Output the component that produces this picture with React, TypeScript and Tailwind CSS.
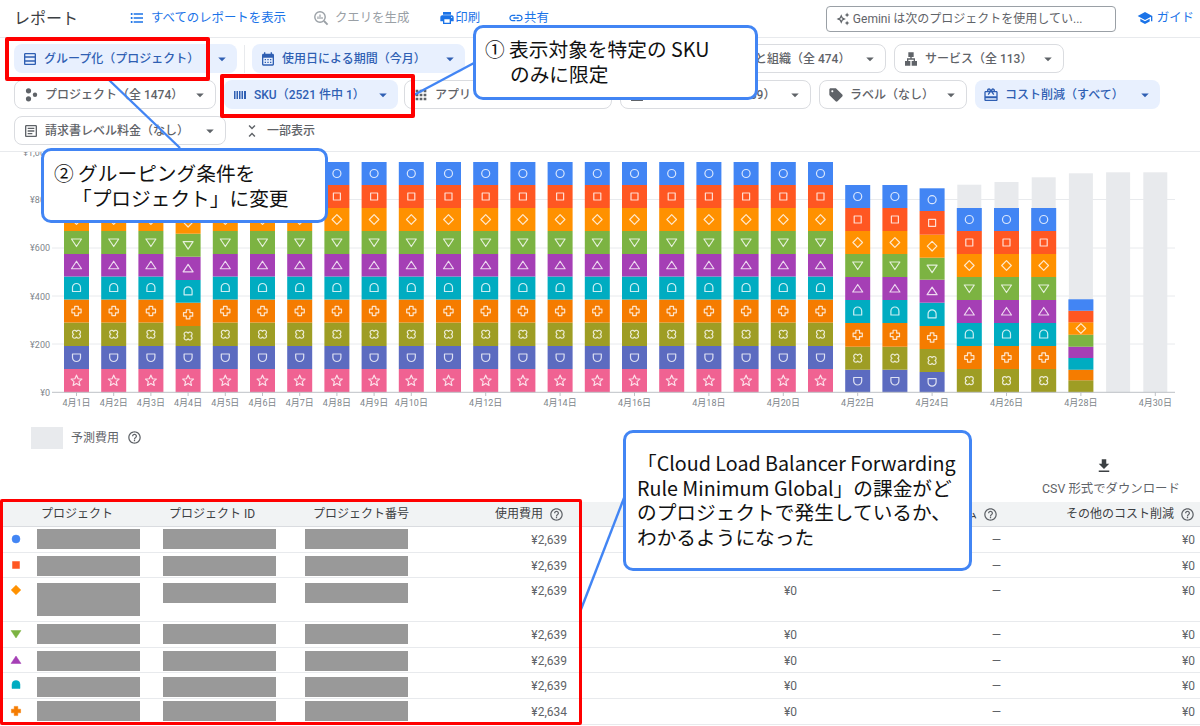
import type { ReactNode } from "react";
import {
  MdApps,
  MdArrowDropDown,
  MdCalendarMonth,
  MdCardGiftcard,
  MdFileDownload,
  MdFormatListBulleted,
  MdHelpOutline,
  MdLan,
  MdLink,
  MdOutlineArticle,
  MdOutlineAutoAwesome,
  MdOutlineListAlt,
  MdOutlineTableRows,
  MdPrint,
  MdSchool,
  MdSell,
  MdUnfoldLess,
} from "react-icons/md";

const COLORS = [
  "#f06292",
  "#5c6bc0",
  "#9e9d24",
  "#f57c00",
  "#00acc1",
  "#a53fb5",
  "#7cb342",
  "#ff9100",
  "#ff5722",
  "#4285f4",
];

type Shape = "star" | "shield" | "clover" | "cross" | "dome" | "up" | "down" | "diamond" | "square" | "circle";
const SHAPES: Shape[] = ["star", "shield", "clover", "cross", "dome", "up", "down", "diamond", "square", "circle"];

function Marker({ shape, x, y, color, fill }: { shape: Shape; x: number; y: number; color: string; fill: boolean }) {
  const p = {
    fill: fill ? color : "none",
    stroke: color,
    strokeWidth: fill ? 0.5 : 1.2,
    strokeOpacity: fill ? 1 : 0.8,
    strokeLinejoin: "round" as const,
  };
  const g = `translate(${x} ${y})`;
  switch (shape) {
    case "circle":
      return <circle cx={x} cy={y} r={4} {...p} />;
    case "square":
      return <rect x={x - 3.5} y={y - 3.5} width={7} height={7} {...p} />;
    case "diamond":
      return <path transform={g} d="M0 -4.8L4.8 0L0 4.8L-4.8 0Z" {...p} />;
    case "down":
      return <path transform={g} d="M-5 -3.5H5L0 4Z" {...p} />;
    case "up":
      return <path transform={g} d="M-5 3.5H5L0 -4Z" {...p} />;
    case "dome":
      return <path transform={g} d="M-4 3.5V-0.5A4 4 0 0 1 4 -0.5V3.5Z" {...p} />;
    case "cross":
      return <path transform={g} d="M-1.8 -4.6H1.8V-1.8H4.6V1.8H1.8V4.6H-1.8V1.8H-4.6V-1.8H-1.8Z" {...p} />;
    case "clover":
      return (
        <path
          transform={g}
          d="M0 -2.8A2.1 2.1 0 1 1 2.8 0A2.1 2.1 0 1 1 0 2.8A2.1 2.1 0 1 1 -2.8 0A2.1 2.1 0 1 1 0 -2.8Z"
          {...p}
        />
      );
    case "shield":
      return <path transform={g} d="M-4 -3.5H4V0A4 4 0 0 1 -4 0Z" {...p} />;
    case "star":
      return <path transform={g} d="M0 -5.5L1.6 -1.9L5.4 -1.5L2.5 1L3.4 4.8L0 2.8L-3.4 4.8L-2.5 1L-5.4 -1.5L-1.6 -1.9Z" {...p} />;
  }
}

// page-y of every segment edge, bottom to top; first colour index tells where the stack starts
const FULL = [393.3, 370, 347, 323.5, 300.5, 277.5, 255, 232, 209, 186, 163];
const DAY4 = [393.3, 370, 347, 327, 303.7, 281, 257.7, 234.7, 211.7, 188.7, 165.7];
const DAY22 = [393.3, 370.7, 347.7, 324, 301, 278, 255, 232, 209, 186];
const DAY24 = [393.3, 373, 350, 327, 303.7, 280.7, 258.7, 235.7, 212, 189.3];
const DAY25 = [393.3, 370, 347, 324, 301, 278, 255, 232, 209];
const DAY28 = [393.3, 381.3, 370.7, 359, 347.7, 335.7, 323.3, 311.7, 300.3];

interface Bar {
  day: number;
  edges: number[];
  start: number;
  forecast?: number;
  marks?: number[];
}

const BARS: Bar[] = Array.from({ length: 30 }, (_, i) => {
  const day = i + 1;
  if (day === 4) return { day, edges: DAY4, start: 0 };
  if (day <= 21) return { day, edges: FULL, start: 0 };
  if (day === 22 || day === 23) return { day, edges: DAY22, start: 1 };
  if (day === 24) return { day, edges: DAY24, start: 1 };
  if (day === 25) return { day, edges: DAY25, start: 2, forecast: 185.7 };
  if (day === 26) return { day, edges: DAY25, start: 2, forecast: 183 };
  if (day === 27) return { day, edges: DAY25, start: 2, forecast: 178.3 };
  if (day === 28) return { day, edges: DAY28, start: 2, forecast: 174.3, marks: [7] };
  return { day, edges: [], start: 0, forecast: 173.3 };
});

const barX = (day: number) => 76.5 + (day - 1) * 37.2;

function Chart() {
  return (
    <svg viewBox="0 153 1200 257" className="block h-[257px] w-[1200px]">
      {[152.5, 200.5, 249, 297, 345].map((y) => (
        <line key={y} x1={52} x2={1175} y1={y} y2={y} stroke="#e8eaed" strokeWidth={1} />
      ))}
      {[
        ["¥1,000", 157],
        ["¥800", 204],
        ["¥600", 252],
        ["¥400", 301],
        ["¥200", 349],
        ["¥0", 397],
      ].map(([t, y]) => (
        <text key={t} x={50} y={y} textAnchor="end" fontSize={9} fill="#80868b">
          {t}
        </text>
      ))}
      {BARS.map((b) => {
        const x = barX(b.day);
        return (
          <g key={b.day}>
            {b.forecast && <rect x={x - 12} y={b.forecast} width={24} height={393.3 - b.forecast} fill="#e8eaed" />}
            {b.edges.slice(0, -1).map((bottom, i) => {
              const top = b.edges[i + 1];
              const s = b.start + i;
              return (
                <g key={s}>
                  <rect x={x - 12.5} y={top} width={25} height={bottom - top} fill={COLORS[s]} />
                  {(!b.marks || b.marks.includes(s)) && (
                    <Marker shape={SHAPES[s]} x={x} y={(top + bottom) / 2} color="#fff" fill={false} />
                  )}
                </g>
              );
            })}
            {(b.day <= 10 || b.day % 2 === 0) && (
              <>
                <line x1={x} x2={x} y1={393} y2={397} stroke="#bdc1c6" />
                <text x={x} y={407} textAnchor="middle" fontSize={9} fill="#80868b">
                  4月{b.day}日
                </text>
              </>
            )}
          </g>
        );
      })}
      <line x1={52} x2={1175} y1={393.3} y2={393.3} stroke="#bdc1c6" />
    </svg>
  );
}

interface ChipProps {
  icon: ReactNode;
  label?: string;
  active?: boolean;
  width: string;
}

function Chip({ icon, label, active, width }: ChipProps) {
  return (
    <div
      className={`flex h-[29px] shrink-0 items-center gap-[6px] rounded-lg pl-2 pr-[6px] text-xs font-medium ${width} ${
        active ? "bg-[#e8f0fe] text-[#2f5fb3]" : "border border-[#dadce0] bg-white text-[#5f6368]"
      }`}
    >
      <span className="flex h-4 w-4 shrink-0 items-center justify-center text-base">{icon}</span>
      <span className="truncate">{label}</span>
      <MdArrowDropDown className="ml-auto shrink-0 text-lg" />
    </div>
  );
}

function BarcodeIcon() {
  return (
    <svg viewBox="0 0 16 16" className="h-4 w-4" fill="currentColor">
      <path d="M2 4h1.5v8H2zM4.5 4H6v8H4.5zM7 4h1.5v8H7zM9.5 4H11v8H9.5zM12 4h2v8h-2z" />
    </svg>
  );
}

function ProjectDotsIcon() {
  return (
    <svg viewBox="0 0 16 16" className="h-4 w-4" fill="currentColor">
      <circle cx="5.5" cy="3.8" r="2.6" />
      <circle cx="5.5" cy="11.8" r="2.6" />
      <circle cx="12" cy="7.8" r="2.2" />
    </svg>
  );
}

function QueryIcon() {
  return (
    <svg viewBox="0 0 16 16" className="h-4 w-4" fill="none" stroke="currentColor">
      <circle cx="7" cy="7" r="5.2" strokeWidth="1.4" />
      <path d="M11 11l3.6 3.6" strokeWidth="1.8" />
      <path d="M5 6.5v2.5M7 4.5v4.5M9 7v2" strokeWidth="1.2" />
    </svg>
  );
}

const GRID = "grid grid-cols-[37px_126px_142px_105px_157px_230px_205px_193px]";

const ROWS = [
  { shape: "circle" as Shape, color: COLORS[9], cost: "¥2,639", h: "h-[25.5px]", mt: "mt-[2px]", tall: false, covered: true },
  { shape: "square" as Shape, color: COLORS[8], cost: "¥2,639", h: "h-[25.5px]", mt: "mt-[3.5px]", tall: false, covered: true },
  { shape: "diamond" as Shape, color: COLORS[7], cost: "¥2,639", h: "h-[44px]", mt: "mt-[5px]", tall: true, covered: false },
  { shape: "down" as Shape, color: COLORS[6], cost: "¥2,639", h: "h-[25.5px]", mt: "mt-[2px]", tall: false, covered: false },
  { shape: "up" as Shape, color: COLORS[5], cost: "¥2,639", h: "h-[25.5px]", mt: "mt-[3.5px]", tall: false, covered: false },
  { shape: "dome" as Shape, color: COLORS[4], cost: "¥2,639", h: "h-[26px]", mt: "mt-[4px]", tall: false, covered: false },
  { shape: "cross" as Shape, color: COLORS[3], cost: "¥2,634", h: "h-[26px]", mt: "mt-[2px]", tall: false, covered: false },
];

function HelpIcon() {
  return <MdHelpOutline className="shrink-0 text-[15px] text-[#5f6368]" />;
}

function ProjectTable() {
  return (
    <div>
      <div className={`${GRID} h-[25px] items-center border-b border-[#dadce0] bg-[#f1f3f4] text-xs text-[#3c4043]`}>
        <div />
        <div className="pl-1">プロジェクト</div>
        <div className="pl-[6px]">プロジェクト ID</div>
        <div className="pl-2">プロジェクト番号</div>
        <div className="flex items-center justify-end gap-[6px] pr-[3px]">
          使用費用 <HelpIcon />
        </div>
        <div />
        <div className="flex items-center justify-end gap-[6px] pr-1">
          <span className="w-[12px] overflow-hidden">ム</span> <HelpIcon />
        </div>
        <div className="flex items-center justify-end gap-[6px]">
          その他のコスト削減 <HelpIcon />
        </div>
      </div>
      {ROWS.map((r, i) => (
        <div key={i} className={`${GRID} ${r.h} items-start border-b border-[#e8eaed] text-xs leading-[26px] text-[#5f6368]`}>
          <svg viewBox="0 0 32 24" className="h-6 w-8">
            <Marker shape={r.shape} x={16} y={12} color={r.color} fill />
          </svg>
          <div className={`${r.mt} ${r.tall ? "h-[33px]" : "h-5"} w-[103px] bg-[#999999]`} />
          <div className={`${r.mt} h-5 w-[113px] bg-[#999999]`} />
          <div className={`${r.mt} h-5 w-[103px] bg-[#999999]`} />
          <div className="text-right">{r.cost}</div>
          <div className="text-right">{r.covered ? "" : "¥0"}</div>
          <div className="pr-[1px] text-right">—</div>
          <div className="text-right">¥0</div>
        </div>
      ))}
    </div>
  );
}

function Callout({ className, children }: { className: string; children: ReactNode }) {
  return (
    <div
      className={`absolute rounded-[10px] border-[3px] border-[#4285f4] bg-white font-['Noto_Sans_CJK_JP',sans-serif] text-[19.7px] leading-[24.5px] text-[#111] ${className}`}
    >
      {children}
    </div>
  );
}

export default function App() {
  return (
    <div className="relative h-[726px] w-[1200px] overflow-hidden bg-white font-[Roboto,'Noto_Sans_CJK_JP',sans-serif]">
      <header className="flex h-[38px] items-center border-b border-[#e8eaed] text-[12.4px]">
        <h1 className="ml-[14px] w-[115px] text-base text-[#3c4043]">レポート</h1>
        <div className="flex items-center gap-[6px] text-[#1a73e8]">
          <MdFormatListBulleted className="text-base" />
          すべてのレポートを表示
        </div>
        <div className="ml-[27px] flex items-center gap-[6px] text-[#9aa0a6]">
          <QueryIcon />
          クエリを生成
        </div>
        <div className="ml-[30px] flex items-center text-[#1a73e8]">
          <MdPrint className="text-base" />
          印刷
        </div>
        <div className="ml-[28px] flex items-center text-[#1a73e8]">
          <MdLink className="text-base" />
          共有
        </div>
        <div className="ml-[277px] flex h-[26px] w-[290px] shrink-0 items-center gap-[3px] rounded border border-[#9aa0a6] pl-[9px] text-xs text-[#5f6368]">
          <MdOutlineAutoAwesome className="text-sm" />
          Gemini は次のプロジェクトを使用してい...
        </div>
        <div className="ml-[21px] flex items-center gap-1 text-[#1a73e8]">
          <MdSchool className="text-base" />
          ガイド
        </div>
      </header>

      <section className="flex h-[114px] flex-col gap-[7px] border-b border-[#e8eaed] pl-[14px] pt-[6px]">
        <div className="flex items-center">
          <Chip active width="w-[223px]" icon={<MdOutlineTableRows />} label={"グループ化\uFF08プロジェクト\uFF09"} />
          <div className="mx-[7px] h-7 w-px bg-[#e8eaed]" />
          <Chip active width="w-[213px]" icon={<MdCalendarMonth />} label={"使用日による期間\uFF08今月\uFF09"} />
          <div className="ml-2 flex gap-2">
            <Chip width="w-[195px]" icon={<MdOutlineListAlt />} />
            <Chip width="w-[210px]" icon={<MdOutlineListAlt />} label={"フォルダと組織\uFF08全 474\uFF09"} />
            <Chip width="w-[170px]" icon={<MdLan />} label={"サービス\uFF08全 113\uFF09"} />
          </div>
        </div>
        <div className="flex items-center gap-2">
          <Chip width="w-[202px]" icon={<ProjectDotsIcon />} label={"プロジェクト\uFF08全 1474\uFF09"} />
          <Chip active width="w-[174px]" icon={<BarcodeIcon />} label={"SKU\uFF082521 件中 1\uFF09"} />
          <div className="ml-[-2px]">
            <Chip width="w-[208px]" icon={<MdApps />} label="アプリ" />
          </div>
          <Chip width="w-[191px]" icon={<MdOutlineListAlt />} label={"ロケーション\uFF08全 59\uFF09"} />
          <Chip width="w-[148px]" icon={<MdSell />} label={"ラベル\uFF08なし\uFF09"} />
          <Chip active width="w-[185px]" icon={<MdCardGiftcard />} label={"コスト削減\uFF08すべて\uFF09"} />
        </div>
        <div className="flex items-center">
          <Chip width="w-[212px]" icon={<MdOutlineArticle />} label={"請求書レベル料金\uFF08なし\uFF09"} />
          <div className="ml-[17px] flex items-center gap-[6px] text-xs font-medium text-[#5f6368]">
            <MdUnfoldLess className="text-lg" />
            一部表示
          </div>
        </div>
      </section>

      <Chart />

      <div className="flex h-[45px] items-start pl-[31px] pt-[18px] text-xs text-[#5f6368]">
        <div className="h-[22px] w-8 bg-[#e8eaed]" />
        <span className="ml-2 mt-[3px]">予測費用</span>
        <MdHelpOutline className="ml-2 mt-[3px] text-[15px]" />
      </div>

      <div className="flex h-[48px] justify-end pr-[18px] pt-[3px] text-[12.4px] text-[#5f6368]">
        <div className="flex w-[140px] flex-col items-start">
          <MdFileDownload className="ml-[53px] text-lg text-[#3c4043]" />
          <span className="mt-[5px] whitespace-nowrap">CSV 形式でダウンロード</span>
        </div>
      </div>

      <ProjectTable />

      {/* annotations drawn on top of the screenshot */}
      <svg viewBox="0 0 1200 726" className="pointer-events-none absolute inset-0 h-[726px] w-[1200px]">
        <g stroke="#4285f4" strokeWidth={2.4} fill="none">
          <line x1={474} y1={63} x2={412} y2={96} />
          <line x1={109} y1={80} x2={180} y2={148} />
          <line x1={624} y1={498} x2={580} y2={612} />
        </g>
      </svg>
      <div className="absolute left-[5px] top-[37px] h-[44px] w-[205px] rounded-[2px] border-[4px] border-[#ff0000]" />
      <div className="absolute left-[220px] top-[74px] h-[44px] w-[195px] rounded-[2px] border-[4px] border-[#ff0000]" />
      <div className="absolute left-0 top-[499px] h-[226px] w-[582px] rounded-[2px] border-[3px] border-[#ff0000]" />

      <Callout className="left-[473px] top-[25px] h-[75px] w-[285px] pl-[9px] pt-[9px]">
        ① 表示対象を特定の SKU
        <br />
        <span className="ml-[25px]">のみに限定</span>
      </Callout>
      <Callout className="left-[41px] top-[148px] h-[75px] w-[287px] pl-[10px] pt-[10px]">
        ② グルーピング条件を
        <br />
        <span className="ml-[18px]">「プロジェクト」に変更</span>
      </Callout>
      <Callout className="left-[623px] top-[430px] h-[141px] w-[349px] pl-[11px] pt-[18px]">
        「Cloud Load Balancer Forwarding
        <br />
        Rule Minimum Global」の課金がど
        <br />
        のプロジェクトで発生しているか、
        <br />
        わかるようになった
      </Callout>
    </div>
  );
}
